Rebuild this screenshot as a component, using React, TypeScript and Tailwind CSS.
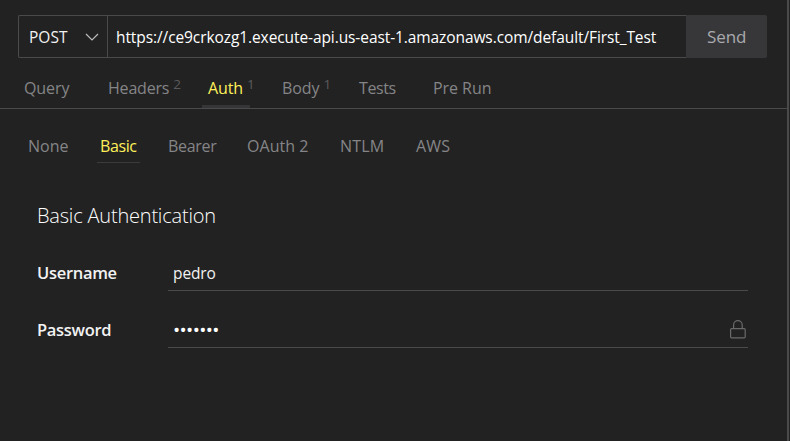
import React from "react";

type Tab = { label: string; count?: number; active?: boolean; cell: string; track: string };

const requestTabs: Tab[] = [
  { label: "Query", cell: "w-[84px]", track: "tracking-[-0.1px]" },
  { label: "Headers", count: 2, cell: "w-[100px]", track: "tracking-[-0.2px]" },
  { label: "Auth", count: 1, active: true, cell: "w-[74px]", track: "tracking-[-0.1px]" },
  { label: "Body", count: 1, cell: "w-[77px]", track: "tracking-[-0.1px]" },
  { label: "Tests", cell: "w-[74px]", track: "tracking-[-0.4px]" },
  { label: "Pre Run", cell: "w-[80px]", track: "tracking-[-0.05px]" },
];

const authTabs: Tab[] = [
  { label: "None", cell: "w-[72px]", track: "tracking-[0px]" },
  { label: "Basic", active: true, cell: "w-[68px]", track: "tracking-[-0.4px]" },
  { label: "Bearer", cell: "w-[79px]", track: "tracking-[-0.3px]" },
  { label: "OAuth 2", cell: "w-[93px]", track: "tracking-[0.05px]" },
  { label: "NTLM", cell: "w-[76px]", track: "tracking-[0.2px]" },
  { label: "AWS", cell: "w-[60px]", track: "tracking-[0.2px]" },
];

function Lock() {
  return (
    <svg width="18" height="20" viewBox="0 0 18 20" fill="none" stroke="#6a6a6a" strokeWidth="1.2" className="shrink-0">
      <rect x="1.6" y="8.6" width="14.6" height="9.2" rx="1" />
      <path d="M4.6 8.5V5a4.3 4.3 0 0 1 8.6 0v3.5" />
    </svg>
  );
}

export default function App() {
  return (
    <div className="flex h-[441px] w-[790px] overflow-hidden bg-[#222222] font-['Open_Sans',sans-serif] text-[16px] leading-[22px] whitespace-nowrap text-[#f2f2f2]">
      <div className="w-[787px] shrink-0">
        <div className="flex h-[59px] pt-[15px] pl-[18px]">
          <div className="flex h-[43px] w-[668px] rounded-l-[2px] border border-r-0 border-[#4a4a4c]">
            <div className="flex w-[89px] items-center border-r border-[#4a4a4c] pl-[10px]">
              <span className="w-[56px] text-[15.5px] tracking-[0px]">POST</span>
              <svg width="14" height="8" viewBox="0 0 14 8" fill="none" stroke="#bcbcbc" strokeWidth="1.2">
                <path d="M1 1l6 6 6-6" />
              </svg>
            </div>
            <div className="flex items-center pl-[8px]">
              <span className="text-[15.5px] tracking-[-0.09px] text-white">
                https://ce9crkozg1.execute-api.us-east-1.amazonaws.com/default/First_Test
              </span>
            </div>
          </div>
          <button className="flex h-[43px] w-[81px] items-center rounded-r-[2px] bg-[#37373a] pl-[21px] text-[17px] tracking-[-0.1px] text-[#aaaaae]">
            Send
          </button>
        </div>

        <div className="flex h-[50px] border-b border-[#4a4a4c] pl-[24px]">
          {requestTabs.map((t) => (
            <div key={t.label} className={`${t.cell} flex shrink-0 flex-col justify-between pt-[18px]`}>
              <div className={`flex ${t.active ? "font-medium text-[#fff05a]" : "text-[#858587]"}`}>
                <span className={t.track}>{t.label}</span>
                {t.count && <span className="-mt-[4px] ml-[4px] text-[13.5px] font-normal text-[#5a5a5c]">{t.count}</span>}
              </div>
              {t.active && <div className="-ml-[6px] h-[3px] w-[48px] bg-[#353538]" />}
            </div>
          ))}
        </div>

        <div className="flex h-[54px] pl-[28px]">
          {authTabs.map((t) => (
            <div key={t.label} className={`${t.cell} flex shrink-0 flex-col justify-between pt-[26px]`}>
              <span className={`${t.track} ${t.active ? "font-medium text-[#fff05a]" : "text-[#858587]"}`}>{t.label}</span>
              {t.active && <div className="-ml-[3px] h-px w-[43px] bg-[#3b3b3c]" />}
            </div>
          ))}
        </div>

        <div className="pr-[39px] pl-[37px]">
          <h2 className="flex h-[85px] items-start pt-[39px] text-[20px] leading-[28px] font-light tracking-[-0.2px] text-white">
            Basic Authentication
          </h2>
          <div className="flex h-[43px] items-center">
            <label className="w-[131px] pt-[7px] text-[16.5px] font-semibold tracking-[-0.3px]">Username</label>
            <div className="flex h-full flex-1 items-center border-b border-[#4a4a4c] pt-[8px] pl-[5px] text-[15.5px] tracking-[-0.1px]">pedro</div>
          </div>
          <div className="mt-[14px] flex h-[43px] items-center">
            <label className="w-[131px] pt-[7px] text-[16.5px] font-semibold tracking-[-0.3px]">Password</label>
            <div className="flex h-full flex-1 items-center justify-between border-b border-[#4a4a4c] pt-[8px] pr-[1px] pl-[5px]">
              <span className="text-[19px] tracking-[-0.6px] text-white">•••••••</span>
              <Lock />
            </div>
          </div>
        </div>
      </div>
      <div className="w-[2px] bg-[#4a4a4b]" />
    </div>
  );
}
